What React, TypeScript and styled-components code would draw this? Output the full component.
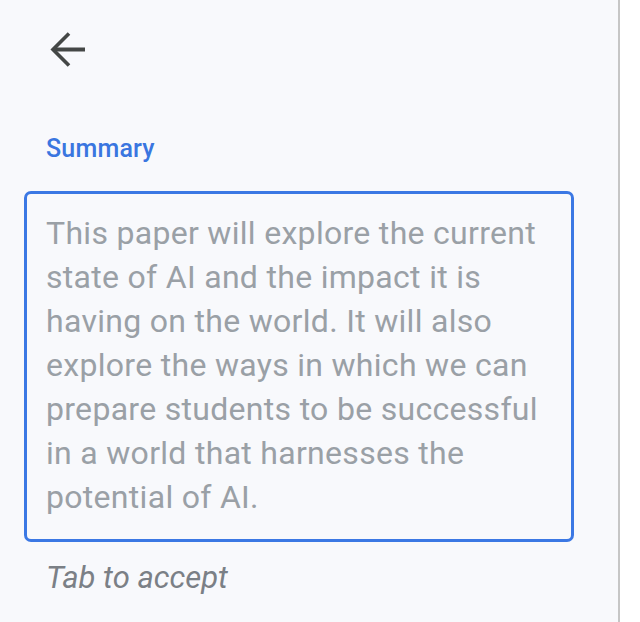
import React, { FC } from "react";
import styled, { createGlobalStyle } from "styled-components";

const GlobalStyle = createGlobalStyle`
  html, body {
    margin: 0;
    padding: 0;
    background: #ffffff;
  }
  body {
    font-family: Roboto, "Noto Sans", Arial, sans-serif;
  }
`;

const Page = styled.div`
  display: flex;
  height: 622px;
  background: #ffffff;
`;

const Panel = styled.aside`
  width: 620px;
  height: 100%;
  box-sizing: border-box;
  background: #f8f9fc;
  border-right: 2px solid #c6c6c6;
  padding: 0 0 0 24px;
  display: flex;
  flex-direction: column;
`;

const BackButton = styled.button`
  width: 48px;
  height: 48px;
  margin: 26px 0 0 20px;
  padding: 0;
  border: none;
  background: transparent;
  display: flex;
  align-items: center;
  justify-content: center;
  cursor: pointer;
`;

const Label = styled.div`
  margin: 59px 0 0 22px;
  color: #3a76e0;
  font-size: 25px;
  font-weight: 500;
  letter-spacing: 0.2px;
  line-height: 32px;
`;

const SummaryBox = styled.div`
  box-sizing: border-box;
  width: 550px;
  margin-top: 26px;
  padding: 17px 22px 20px 19px;
  border: 3px solid #3b78e4;
  border-radius: 7px;
  color: #9aa0a6;
  font-size: 32px;
  letter-spacing: 0.3px;
  line-height: 44px;
`;

const Hint = styled.div`
  margin: 16px 0 0 22px;
  color: #7b8086;
  font-size: 31px;
  font-style: italic;
  line-height: 40px;
`;

const BackArrow: FC = () => (
  <svg width="36" height="36" viewBox="0 0 36 36" fill="none">
    <path d="M35 17.5H3" stroke="#444746" strokeWidth="4" />
    <path d="M19 1.5L3 17.5L19 33.5" stroke="#444746" strokeWidth="3.6" />
  </svg>
);

const App: FC = () => (
  <>
    <GlobalStyle />
    <Page>
      <Panel>
        <BackButton aria-label="Back">
          <BackArrow />
        </BackButton>
        <Label>Summary</Label>
        <SummaryBox>
          This paper will explore the current state of AI and the impact it is
          having on the world. It will also explore the ways in which we can
          prepare students to be successful in a world that harnesses the
          potential of AI.
        </SummaryBox>
        <Hint>Tab to accept</Hint>
      </Panel>
    </Page>
  </>
);

export default App;
